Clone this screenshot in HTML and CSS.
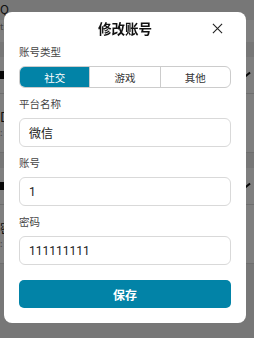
FILE: index.html
```html
<!DOCTYPE html>
<html lang="zh-CN">
<head>
    <meta charset="UTF-8">
    <meta name="viewport" content="width=device-width, initial-scale=1.0">
    <title>修改账号</title>
    <link rel="stylesheet" href="styles.css">
</head>
<body>
    <div class="page">
        <div class="search">Q</div>
        <div class="hint">tip</div>
        <div class="group-head"></div>
        <div class="item">
            <span class="avatar"></span>
            <span class="pencil"></span>
        </div>
        <div class="item tall">
            <span class="name">D</span>
            <span class="meta">:</span>
        </div>
        <div class="group-head"></div>
        <div class="item">
            <span class="avatar"></span>
            <span class="pencil"></span>
        </div>
        <div class="item tall">
            <span class="name">密</span>
            <span class="meta">:</span>
        </div>
    </div>

    <div class="mask">
        <div class="modal">
            <div class="modal-head">
                <span class="modal-title">修改账号</span>
                <svg class="close" width="12" height="12" viewBox="0 0 12 12">
                    <path d="M1 1 L11 11 M11 1 L1 11" stroke="#222" stroke-width="1.2" fill="none"/>
                </svg>
            </div>

            <div class="label first">账号类型</div>
            <div class="segment">
                <div class="seg active">社交</div>
                <div class="seg">游戏</div>
                <div class="seg">其他</div>
            </div>

            <div class="label">平台名称</div>
            <div class="input">微信</div>

            <div class="label">账号</div>
            <div class="input">1</div>

            <div class="label">密码</div>
            <div class="input">111111111</div>

            <button class="save">保存</button>
        </div>
    </div>
</body>
</html>
```

FILE: styles.css
```css
:root {
    --teal: #0283a7;
    --line: #d9d9d9;
    --text: #222;
}
body {
    margin: 0;
    background-color: #eee;
    font-family: "Noto Sans CJK SC", "Noto Sans", sans-serif;
    overflow: hidden;
}
.page {
    height: 338px;
}
.search {
    height: 20px;
    padding-top: 2px;
    box-sizing: border-box;
    font-size: 12px;
    line-height: 14px;
    color: #222;
}
.hint {
    height: 22px;
    font-size: 9px;
    color: #888;
    background: white;
}
.group-head {
    height: 15px;
    background: #eee;
}
.item {
    height: 36px;
    background: white;
    border-bottom: 1px solid #ddd;
    display: flex;
    align-items: center;
    justify-content: space-between;
}
.item.tall {
    height: 58px;
    flex-direction: column;
    align-items: flex-start;
    justify-content: center;
}
.avatar {
    width: 5px;
    height: 8px;
    background: #111;
}
.pencil {
    width: 8px;
    height: 2px;
    margin-right: 3px;
    background: #111;
    transform: rotate(-40deg);
}
.name {
    font-size: 13px;
    color: #222;
}
.meta {
    font-size: 9px;
    color: #999;
}
.mask {
    position: fixed;
    inset: 0;
    background: rgba(0, 0, 0, 0.5);
    padding: 12px 8px 0 4px;
}
.modal {
    background: white;
    border-radius: 8px;
    padding: 0 15px 15px;
}
.modal-head {
    height: 32px;
    display: flex;
    align-items: center;
    justify-content: center;
    position: relative;
}
.modal-title {
    font-size: 13.5px;
    font-weight: bold;
    color: #111;
}
.close {
    position: absolute;
    right: 8px;
    top: 11px;
    width: 11px;
    height: 11px;
}
.label {
    margin-top: 8px;
    height: 16px;
    line-height: 16px;
    font-size: 10.5px;
    color: #444;
}
.label.first {
    margin-top: 0;
}
.segment {
    margin-top: 6px;
    height: 22px;
    display: flex;
    border: 1px solid #ccc;
    border-radius: 6px;
    overflow: hidden;
    box-sizing: border-box;
}
.seg {
    flex: 1;
    display: flex;
    align-items: center;
    justify-content: center;
    font-size: 10.5px;
    color: #333;
    border-left: 1px solid #ccc;
}
.seg:first-child {
    border-left: none;
}
.seg.active {
    background: var(--teal);
    color: white;
}
.input {
    margin-top: 6px;
    height: 29px;
    box-sizing: border-box;
    border: 1px solid var(--line);
    border-radius: 6px;
    padding-left: 9px;
    display: flex;
    align-items: center;
    font-family: Roboto, "Noto Sans CJK SC", sans-serif;
    font-size: 12px;
    color: var(--text);
}
.save {
    display: block;
    width: 100%;
    margin-top: 15px;
    height: 28px;
    border: none;
    border-radius: 5px;
    background: var(--teal);
    color: white;
    font-family: inherit;
    font-size: 12px;
    font-weight: bold;
}
```
